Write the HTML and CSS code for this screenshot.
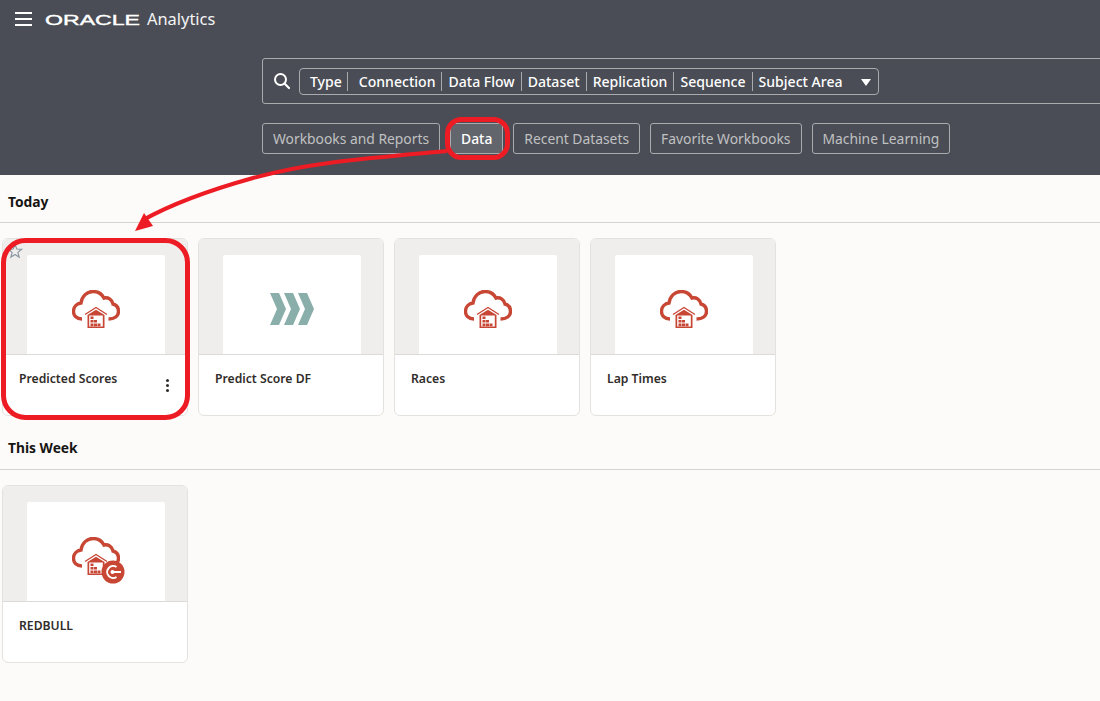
FILE: index.html
```html
<!DOCTYPE html>
<html>

<head>
	<link rel="stylesheet" href="styles.css">
</head>

<body>
	<svg width="0" height="0" class="defs">
		<symbol id="cloud" viewBox="0 0 48 38">
			<path d="M10 29 C4.5 29 1.5 25.5 1.5 21.5 C1.5 16.5 5 13.5 9 13 C10 6 15 1.5 21 1.5 C26 1.5 30 4 32 8 C36 7 40 9.5 41 14 C45 15 46.5 18 46.5 21.5 C46.5 26 42.5 29 36.5 29" fill="none" stroke="#c74634" stroke-width="3.4" />
			<path d="M13 24.5 L24 17.5 L35 24.5" fill="none" stroke="#c74634" stroke-width="1.3" />
			<path d="M15.5 25 L24 19.8 L32.5 25 V38 H15.5 Z" fill="#c74634" />
			<path d="M17.2 25.5 H30.8 V36.4 H17.2 Z" fill="#fff" />
			<path d="M18.5 26.5 h3 v2.6 h-3 z M18.5 30 h3 v2.6 h-3 z M22 30 h3 v2.6 h-3 z M18.5 33.6 h3 v2.6 h-3 z M22 33.6 h3 v2.6 h-3 z M25.5 33.6 h3 v2.6 h-3 z" fill="#c74634" />
		</symbol>
	</svg>

	<header class="topbar">
		<div class="brand">
			<div class="burger"><span></span><span></span><span></span></div>
			<span class="logo">ORACLE</span>
			<span class="product">Analytics</span>
		</div>

		<div class="search-area">
			<div class="search-box">
				<svg class="search-icon" width="18" height="18" viewBox="0 0 18 18">
					<circle cx="7.5" cy="7.5" r="5.5" fill="none" stroke="#fff" stroke-width="2" />
					<path d="M11.5 11.5 L16 16" stroke="#fff" stroke-width="2.2" stroke-linecap="round" />
				</svg>
				<div class="filter">
					<span class="chip chip-type">Type</span>
					<span class="chip">Connection</span>
					<span class="chip">Data Flow</span>
					<span class="chip">Dataset</span>
					<span class="chip">Replication</span>
					<span class="chip">Sequence</span>
					<span class="chip chip-last">Subject Area</span>
					<span class="caret"></span>
				</div>
			</div>

			<div class="pills">
				<span class="pill">Workbooks and Reports</span>
				<span class="pill pill-active">Data</span>
				<span class="pill">Recent Datasets</span>
				<span class="pill">Favorite Workbooks</span>
				<span class="pill">Machine Learning</span>
			</div>
		</div>
	</header>

	<main>
		<h2 class="section-title">Today</h2>
		<div class="cards">
			<div class="card">
				<div class="card-top">
					<svg class="star" width="16" height="16" viewBox="0 0 16 16">
						<path d="M8 1.5 L9.8 6 L14.6 6.3 L10.9 9.4 L12.1 14.1 L8 11.5 L3.9 14.1 L5.1 9.4 L1.4 6.3 L6.2 6 Z" fill="none" stroke="#8b98a3" stroke-width="1.2" />
					</svg>
					<div class="thumb"><svg class="cloud" width="48" height="38"><use href="#cloud" /></svg></div>
				</div>
				<div class="card-body">
					<span class="card-name">Predicted Scores</span>
					<div class="more"><span></span><span></span><span></span></div>
				</div>
			</div>

			<div class="card">
				<div class="card-top">
					<div class="thumb">
						<svg width="44" height="32" viewBox="0 0 44 32">
							<path d="M0 0 H9 L16 16 L9 32 H0 L7 16 Z M14 0 H23 L30 16 L23 32 H14 L21 16 Z M28 0 H37 L44 16 L37 32 H28 L35 16 Z" fill="#8aaeaa" />
						</svg>
					</div>
				</div>
				<div class="card-body"><span class="card-name">Predict Score DF</span></div>
			</div>

			<div class="card">
				<div class="card-top">
					<div class="thumb"><svg class="cloud" width="48" height="38"><use href="#cloud" /></svg></div>
				</div>
				<div class="card-body"><span class="card-name">Races</span></div>
			</div>

			<div class="card">
				<div class="card-top">
					<div class="thumb"><svg class="cloud" width="48" height="38"><use href="#cloud" /></svg></div>
				</div>
				<div class="card-body"><span class="card-name">Lap Times</span></div>
			</div>
		</div>

		<h2 class="section-title section-week">This Week</h2>
		<div class="cards">
			<div class="card">
				<div class="card-top">
					<div class="thumb">
						<div class="cloud-badge">
							<svg class="cloud" width="48" height="38"><use href="#cloud" /></svg>
							<svg class="badge" width="24" height="24" viewBox="0 0 24 24">
								<circle cx="12" cy="12" r="11.5" fill="#c74634" />
								<path d="M15.5 7 A6 6 0 1 0 15.5 17" fill="none" stroke="#fff" stroke-width="2" />
								<path d="M12 12 H20" stroke="#fff" stroke-width="2" />
								<circle cx="11.5" cy="12" r="2" fill="#fff" />
							</svg>
						</div>
					</div>
				</div>
				<div class="card-body"><span class="card-name">REDBULL</span></div>
			</div>
		</div>
	</main>

	<!-- red callouts drawn on top of the screenshot -->
	<svg class="callouts" width="1100" height="701" viewBox="0 0 1100 701">
		<rect x="3.5" y="240.5" width="184" height="177" rx="22" fill="none" stroke="#ed1c24" stroke-width="5" />
		<rect x="447.5" y="119.5" width="60" height="38" rx="14" fill="none" stroke="#ed1c24" stroke-width="5" />
		<path d="M447 151 C370 158 310 162 253 178 C210 190 170 205 143 220" fill="none" stroke="#ed1c24" stroke-width="4" />
		<path d="M135 231 L153 226 L144 213 Z" fill="#ed1c24" />
	</svg>
</body>

</html>
```

FILE: styles.css
```css
* {
	box-sizing: border-box;
}

body {
	margin: 0;
	height: 701px;
	overflow: hidden;
	position: relative;
	background: #fcfbfa;
	font-family: "Noto Sans", Arial, sans-serif;
}

.defs {
	display: block;
	height: 0;
}

.topbar {
	height: 175px;
	background: #4a4d55;
	color: #fff;
	overflow: hidden;
}

.brand {
	display: flex;
	align-items: center;
	height: 38px;
	padding-left: 15px;
}

.burger {
	display: flex;
	flex-direction: column;
	gap: 4px;
	width: 17px;
	margin-right: 13px;
}

.burger span {
	height: 2px;
	background: #fff;
}

.logo {
	font-family: "Liberation Sans", Arial, sans-serif;
	font-size: 15px;
	line-height: 16px;
	width: 94px;
	margin-top: 1px;
	font-weight: 400;
	-webkit-text-stroke: 0.4px #fff;
	transform: scaleX(1.54);
	transform-origin: left center;
}

.product {
	font-size: 16.4px;
	margin-left: 8px;
	margin-bottom: 2px;
	color: #f4f4f4;
}

.search-area {
	margin-left: 262px;
	margin-top: 20px;
	width: 860px;
}

.search-box {
	display: flex;
	align-items: center;
	height: 46px;
	border: 1px solid #a9abaf;
	border-radius: 3px;
	padding-left: 10px;
}

.search-icon {
	margin-right: 8px;
}

.filter {
	display: flex;
	align-items: center;
	height: 27px;
	width: 580px;
	border: 1px solid #a9abaf;
	border-radius: 4px;
	padding-left: 10px;
	position: relative;
}

.chip {
	font-size: 14.05px;
	font-weight: 500;
	line-height: 18px;
	padding: 1px 6px 0 0;
	margin-right: 6px;
	border-right: 1px solid #a9abaf;
	white-space: nowrap;
}

.chip-type {
	padding-right: 5px;
	margin-right: 11px;
}

.chip-last {
	border-right: 0;
}

.caret {
	position: absolute;
	right: 7px;
	top: 10px;
	border-left: 5px solid transparent;
	border-right: 5px solid transparent;
	border-top: 7px solid #fff;
}

.pills {
	display: flex;
	gap: 10px;
	margin-top: 19px;
}

.pill {
	height: 31px;
	line-height: 29px;
	padding: 0 10px;
	font-size: 13.85px;
	color: #c0c1c3;
	border: 1px solid #a9abaf;
	border-radius: 3px;
	white-space: nowrap;
}

.pill-active {
	color: #fff;
	font-weight: 500;
	background: #62656b;
}

main {
	padding-left: 2px;
}

.section-title {
	margin: 0 0 15px -2px;
	padding: 17px 0 0 8px;
	height: 48px;
	font-size: 13.8px;
	line-height: 20px;
	font-weight: 700;
	color: #161513;
	border-bottom: 1px solid #d5d3cf;
}

.section-week {
	padding-top: 22px;
	height: 54px;
}

.cards {
	display: flex;
	gap: 10px;
}

.card {
	width: 186px;
	height: 178px;
	background: #fff;
	border: 1px solid #e4e2de;
	border-radius: 6px;
	overflow: hidden;
	display: flex;
	flex-direction: column;
}

.card-top {
	height: 116px;
	flex: none;
	background: #efeeec;
	border-bottom: 1px solid #dcdad6;
	padding: 16px 0 0 24px;
	position: relative;
}

.star {
	position: absolute;
	left: 4px;
	top: 4px;
}

.thumb {
	width: 138px;
	height: 99px;
	padding-top: 8px;
	background: #fff;
	border-radius: 2px 2px 0 0;
	display: flex;
	align-items: center;
	justify-content: center;
}

.card-body {
	padding: 15px 12px 0 16px;
	flex: 1;
	position: relative;
}

.card-name {
	font-size: 12.2px;
	font-weight: 600;
	line-height: 17px;
	color: #312d2a;
	display: block;
}

.more {
	position: absolute;
	right: 18px;
	top: 24px;
	display: flex;
	flex-direction: column;
	gap: 2px;
}

.more span {
	width: 3px;
	height: 3px;
	border-radius: 50%;
	background: #312d2a;
}

.cloud-badge {
	position: relative;
	width: 48px;
	height: 38px;
}

.badge {
	position: absolute;
	left: 29px;
	top: 23px;
}

.callouts {
	position: absolute;
	left: 0;
	top: 0;
	pointer-events: none;
}
```
